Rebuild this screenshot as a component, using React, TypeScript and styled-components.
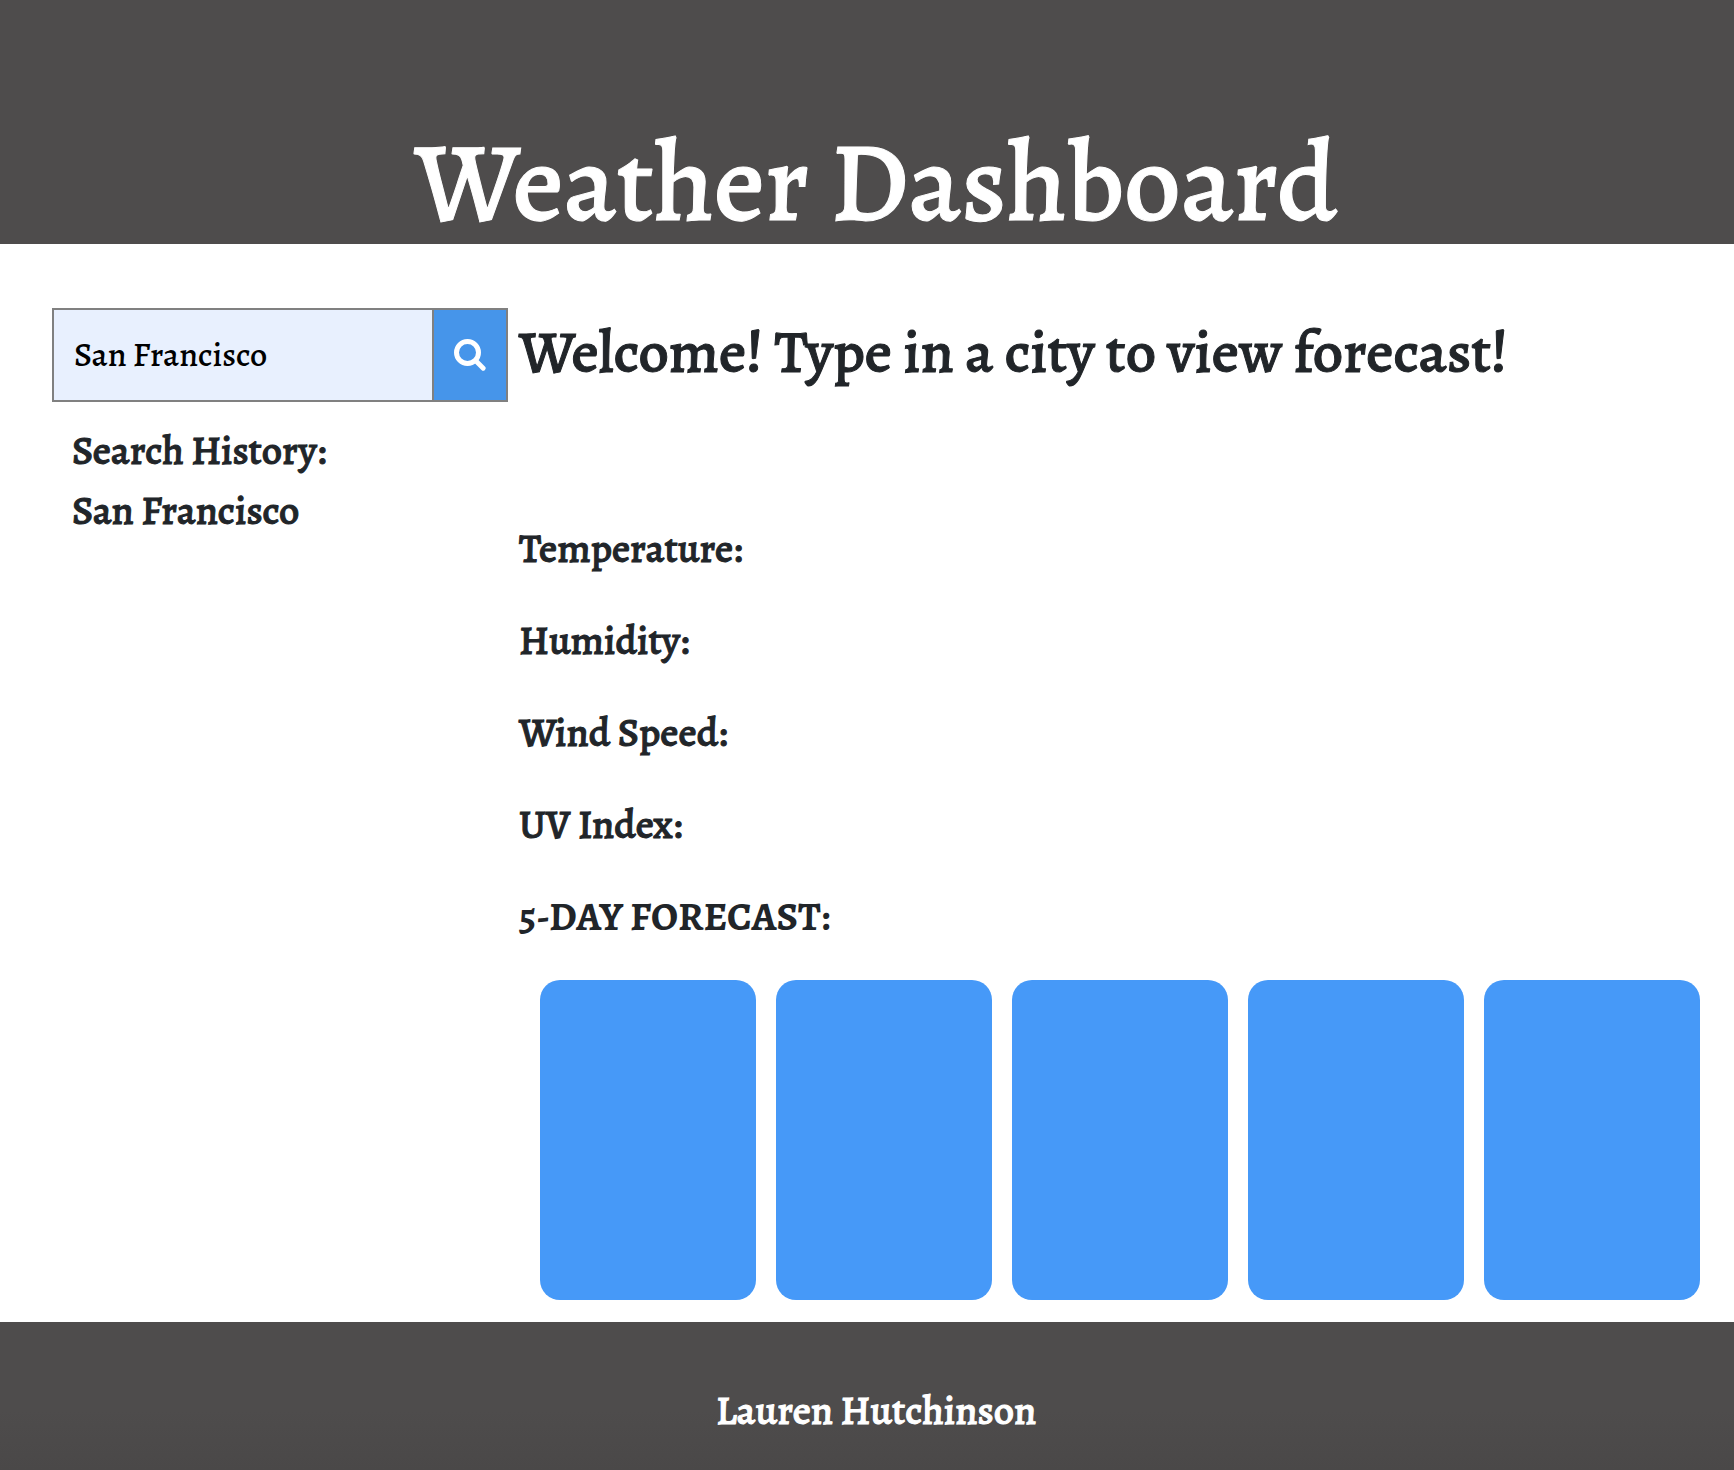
import React, { useState } from 'react';
import styled, { createGlobalStyle } from 'styled-components';

const GlobalStyle = createGlobalStyle`
  *, *::before, *::after { box-sizing: border-box; }
  body {
    margin: 0;
    background: #fff;
    color: #212529;
    font-family: Alegreya, "Liberation Serif", serif;
    font-weight: 500;
    -webkit-text-stroke: 1px currentColor;
  }
  h1, h2, h3, p, ul { margin: 0; padding: 0; font-weight: 500; }
`;

const Page = styled.div`
  display: flex;
  flex-direction: column;
  min-height: 100vh;
`;

const Header = styled.header`
  padding: 123px 0 1px 18px;
  background: #4e4c4c;
  color: #fff;
  text-align: center;
  -webkit-text-stroke-color: #fff;
`;

const Title = styled.h1`
  font-size: 112px;
  line-height: 120px;
`;

const Content = styled.main`
  flex: 1;
  display: grid;
  grid-template-columns: 456px minmax(0, 1fr);
  column-gap: 11px;
  padding: 64px 34px 22px 52px;

  @media (max-width: 1000px) {
    grid-template-columns: minmax(0, 1fr);
    row-gap: 32px;
  }
`;

const SearchForm = styled.form`
  display: flex;
  height: 94px;
  border: 2px solid #808080;
`;

const SearchInput = styled.input`
  flex: 1;
  min-width: 0;
  padding: 0 20px 2px;
  border: 0;
  border-radius: 0;
  outline: 0;
  background: #e8f0fe;
  color: #000;
  font: 500 34px Alegreya, "Liberation Serif", serif;
  -webkit-text-stroke-width: 0;
`;

const SearchButton = styled.button`
  display: flex;
  align-items: center;
  justify-content: center;
  width: 74px;
  padding: 0;
  border: 0;
  border-left: 2px solid #808080;
  background: #4695ea;
  color: #fff;
  cursor: pointer;
`;

const History = styled.section`
  padding: 19px 0 0 20px;
`;

const BodyText = styled.p`
  font-size: 40px;
  line-height: 60px;
`;

const HistoryList = styled.ul`
  list-style: none;
`;

const Welcome = styled.h2`
  margin-bottom: 123px;
  font-size: 60px;
  line-height: 88px;
`;

const Metrics = styled.div`
  display: flex;
  flex-direction: column;
  gap: 32px;
`;

const ForecastHeading = styled.h3`
  margin: 32px 0 33px;
  font-size: 40px;
  line-height: 60px;
  && { font-weight: 700; }
  -webkit-text-stroke-width: 0;
`;

const Forecast = styled.div`
  display: grid;
  grid-template-columns: repeat(5, minmax(0, 1fr));
  gap: 20px;
  padding-left: 21px;
`;

const DayCard = styled.article`
  min-height: 320px;
  border-radius: 20px;
  background: #4699f8;
`;

const Footer = styled.footer`
  padding: 59px 0 29px 18px;
  background: linear-gradient(#4e4c4c 60%, #4a4848);
  color: #fff;
  text-align: center;
  -webkit-text-stroke-color: #fff;
`;

const metrics = ['Temperature:', 'Humidity:', 'Wind Speed:', 'UV Index:'];
const days = [1, 2, 3, 4, 5];

function SearchIcon() {
  return (
    <svg width="32" height="32" viewBox="0 0 32 32" fill="none" stroke="currentColor" aria-hidden="true">
      <circle cx="13.5" cy="13.5" r="11" strokeWidth="5" />
      <path d="M21.5 21.5 29.2 29.2" strokeWidth="4.8" strokeLinecap="round" />
    </svg>
  );
}

export default function App() {
  const [city, setCity] = useState('San Francisco');
  const [history, setHistory] = useState(['San Francisco']);

  const search = (event: React.FormEvent) => {
    event.preventDefault();
    const name = city.trim();
    if (name) setHistory([...history, name]);
  };

  return (
    <Page>
      <GlobalStyle />
      <Header>
        <Title>Weather Dashboard</Title>
      </Header>
      <Content>
        <aside>
          <SearchForm onSubmit={search}>
            <SearchInput aria-label="City" value={city} onChange={(e) => setCity(e.target.value)} />
            <SearchButton type="submit" aria-label="Search">
              <SearchIcon />
            </SearchButton>
          </SearchForm>
          <History>
            <BodyText>Search History:</BodyText>
            <HistoryList>
              {history.map((name, i) => (
                <BodyText as="li" key={i}>{name}</BodyText>
              ))}
            </HistoryList>
          </History>
        </aside>
        <section>
          <Welcome>Welcome! Type in a city to view forecast!</Welcome>
          <Metrics>
            {metrics.map((label) => (
              <BodyText key={label}>{label}</BodyText>
            ))}
          </Metrics>
          <ForecastHeading>5-DAY FORECAST:</ForecastHeading>
          <Forecast>
            {days.map((day) => (
              <DayCard key={day} />
            ))}
          </Forecast>
        </section>
      </Content>
      <Footer>
        <BodyText>Lauren Hutchinson</BodyText>
      </Footer>
    </Page>
  );
}
